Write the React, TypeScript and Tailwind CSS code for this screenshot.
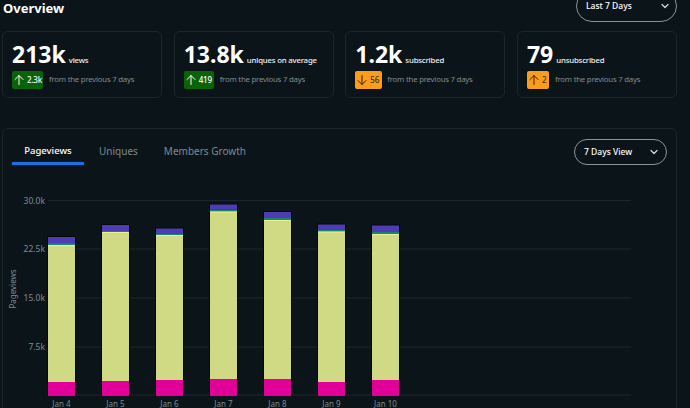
import React from "react";

const font = { fontFamily: '"Noto Sans", sans-serif' };

function Chevron() {
  return (
    <svg width="10" height="10" viewBox="0 0 10 10" fill="none" stroke="#d5dcdf" strokeWidth="1.2" strokeLinecap="round" strokeLinejoin="round">
      <path d="M2 3.5 5 6.5 8 3.5" />
    </svg>
  );
}

function Arrow({ dir, color }: { dir: "up" | "down"; color: string }) {
  return (
    <svg width="12" height="12" viewBox="0 0 12 12" fill="none" stroke={color} strokeWidth="1" strokeLinecap="round" strokeLinejoin="round">
      {dir === "up" ? <path d="M6 10.5V1.5M2 5.5 6 1.5 10 5.5" /> : <path d="M6 1.5V10.5M2 6.5 6 10.5 10 6.5" />}
    </svg>
  );
}

function Stat({ value, label, delta, dir, good, badge, gap }: { value: string; label: string; delta: string; dir: "up" | "down"; good: boolean; badge: string; gap: string }) {
  return (
    <div className="h-[67px] w-[160px] shrink-0 rounded-[6px] border border-[#1b252a] pl-[9px] pt-[6px]">
      <div className="flex h-[32px] items-baseline gap-[3px]">
        <span className="text-[23px] font-bold leading-[32px] text-white">{value}</span>
        <span className="text-[7.8px] font-medium tracking-[-0.2px] text-[#eef2f3]">{label}</span>
      </div>
      <div className={`flex items-center ${gap} mt-[1px]`}>
        <div className={`${badge} flex h-[18px] items-center gap-[2px] rounded-[2px] pl-[1px] ${good ? "bg-[#0b6309] text-white" : "bg-[#fb9d1c] text-[#4a3108]"}`}>
          <Arrow dir={dir} color={good ? "#ffffff" : "#3a2506"} />
          <span className="text-[8px] font-medium leading-none tracking-[-0.2px]">{delta}</span>
        </div>
        <span className="text-[7.8px] tracking-[-0.22px] text-[#7f8c93]">from the previous 7 days</span>
      </div>
    </div>
  );
}

const bars = [
  { x: 48, top: 237, teal: 243, yellow: 245, pink: 382, label: "Jan 4" },
  { x: 102, top: 225, teal: 231, yellow: 232, pink: 381, label: "Jan 5" },
  { x: 156, top: 228.5, teal: 234, yellow: 235, pink: 380, label: "Jan 6" },
  { x: 210, top: 204.5, teal: 209.5, yellow: 211.5, pink: 379, label: "Jan 7" },
  { x: 264, top: 212, teal: 218, yellow: 220, pink: 379, label: "Jan 8" },
  { x: 318, top: 224.5, teal: 230, yellow: 231.5, pink: 382, label: "Jan 9" },
  { x: 372, top: 225.5, teal: 232, yellow: 234, pink: 380, label: "Jan 10" },
];
const OY = 156;
const ticks = [
  { y: 200.5, label: "30.0k" },
  { y: 249, label: "22.5k" },
  { y: 298, label: "15.0k" },
  { y: 347, label: "7.5k" },
  { y: 395, label: "" },
];

function Chart() {
  return (
    <svg width="673" height="252" viewBox={`3 ${OY} 673 252`} className="block" style={{ fontFamily: '"Noto Sans", sans-serif' }}>
      {ticks.map((t) => (
        <g key={t.y}>
          <line x1="48" x2="631" y1={t.y} y2={t.y} stroke="#1c272c" strokeWidth="1" />
          <text x="45" y={t.y + 3} textAnchor="end" fontSize="8.5" fill="#7d8b92">{t.label}</text>
        </g>
      ))}
      <text transform="translate(16 289) rotate(-90)" textAnchor="middle" fontSize="8" fill="#7d8b92">Pageviews</text>
      {bars.map((b) => (
        <g key={b.x}>
          <rect x={b.x - 1} y={b.top - 1} width="29" height={396 - b.top + 1} fill="#03080a" />
          <rect x={b.x} y={b.top} width="27" height={b.teal - b.top} fill="#4d3cb4" />
          <rect x={b.x} y={b.teal} width="27" height={b.yellow - b.teal} fill="#1b8273" />
          <rect x={b.x} y={b.yellow} width="27" height={b.pink - b.yellow} fill="#d0da85" />
          <rect x={b.x} y={b.yellow} width="27" height="1" fill="#eaf28e" />
          <rect x={b.x} y={b.pink} width="27" height={396 - b.pink} fill="#e10098" />
          <text x={b.x + 13.5} y="407" textAnchor="middle" fontSize="8" fill="#7d8b92">{b.label}</text>
        </g>
      ))}
    </svg>
  );
}

export default function App() {
  return (
    <div className="h-[408px] w-[690px] overflow-hidden bg-[#0b1519] pl-[2px] pr-[13px]" style={font}>
      <div className="flex h-[31px] items-start justify-between">
        <h1 className="ml-[1px] mt-[-2px] text-[13px] font-bold leading-[20px] text-white">Overview</h1>
        <div className="mt-[-10px] flex h-[32px] w-[101px] items-center justify-between rounded-full border border-[#8a9397] pl-[9px] pr-[6px]">
          <span className="text-[8.5px] font-medium text-white">Last 7 Days</span>
          <Chevron />
        </div>
      </div>
      <div className="flex justify-between">
        <Stat value="213k" label="views" delta="2.3k" dir="up" good badge="w-[31px]" gap="gap-[6px]" />
        <Stat value="13.8k" label="uniques on average" delta="419" dir="up" good badge="w-[30px]" gap="gap-[6px]" />
        <Stat value="1.2k" label="subscribed" delta="56" dir="down" good={false} badge="w-[27px]" gap="gap-[5px]" />
        <Stat value="79" label="unsubscribed" delta="2" dir="up" good={false} badge="w-[22px]" gap="gap-[6px]" />
      </div>
      <div className="mt-[30px] h-[400px] rounded-[6px] border border-[#1b252a]">
        <div className="flex h-[27px] justify-between pl-[9px] pr-[9px]">
          <div className="flex h-[36px] pt-[13px]">
            <div className="flex h-[23px] w-[72px] justify-center border-b-[3px] border-[#1a6fe8] pt-[1px] text-[9.5px] font-medium leading-[16px] text-white">Pageviews</div>
            <div className="ml-[15px] pt-[1px] text-[10px] leading-[16px] text-[#7b8a91]">Uniques</div>
            <div className="ml-[26px] pt-[1px] text-[10px] leading-[16px] text-[#7b8a91]">Members Growth</div>
          </div>
          <div className="mt-[10px] flex h-[26px] w-[93px] items-center justify-between rounded-full border border-[#8a9397] pl-[9px] pr-[7px]">
            <span className="text-[8.5px] font-medium text-white">7 Days View</span>
            <Chevron />
          </div>
        </div>
        <Chart />
      </div>
    </div>
  );
}
